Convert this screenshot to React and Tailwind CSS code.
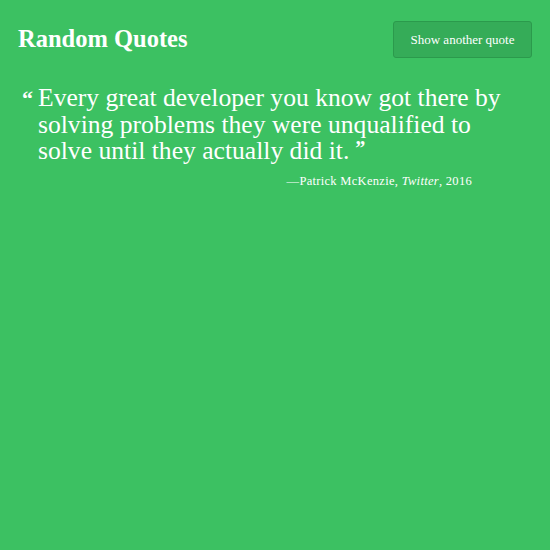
import React from 'react';

const serif = { fontFamily: '"Liberation Serif", "DejaVu Serif", serif' };

const App = () => {
  return (
    <div className="min-h-[550px] w-[550px] bg-[#3cc162] text-white" style={serif}>
      <header className="flex items-center justify-between pl-[18px] pr-[18px] pt-[21px]">
        <h1 className="text-[24.5px] font-bold leading-none">Random Quotes</h1>
        <button className="h-[37px] w-[139px] rounded-[3px] border border-[#2b9a4c] bg-[#35ac58] text-[13px] text-white">
          Show another quote
        </button>
      </header>

      <main className="pl-[22px] pr-[20px] pt-[27px]">
        <blockquote className="flex gap-[5px]">
          <span className="pt-[3px] text-[22px] font-bold leading-none">&ldquo;</span>
          <p className="text-[25.6px] leading-[26.5px]">
            Every great developer you know got there by<br />
            solving problems they were unqualified to<br />
            solve until they actually did it.
            <span className="ml-[6px] align-top text-[20px] font-bold leading-none">&rdquo;</span>
          </p>
        </blockquote>
        <p className="mt-[7px] pr-[58px] text-right text-[12.5px] tracking-[0.3px]">
          &mdash;Patrick McKenzie, <em>Twitter</em>, 2016
        </p>
      </main>
    </div>
  );
};

export default App;
